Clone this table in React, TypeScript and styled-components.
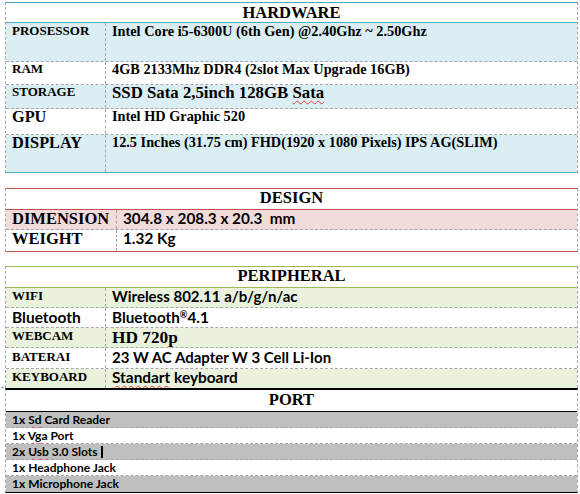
import React from "react";
import styled, { createGlobalStyle, css } from "styled-components";

const GlobalStyle = createGlobalStyle`
  html, body { margin: 0; padding: 0; background: #ffffff; }
  * { box-sizing: border-box; }
`;

const SERIF = `"Liberation Serif", "Times New Roman", serif`;
const SANS = `Lato, "Noto Sans", "Liberation Sans", sans-serif`;
const GRID = "#a6a6a6";

type Accent = { line: string; band: string };
const ACCENTS: Record<string, Accent> = {
  hardware: { line: "#4bacc6", band: "#daeef3" },
  design: { line: "#c0504d", band: "#f2dbdb" },
  peripheral: { line: "#9bbb59", band: "#eaf1dd" },
  port: { line: "#000000", band: "#bfbfbf" },
};

const Page = styled.div`
  position: relative;
  width: 578px;
  padding: 2px 0 0 5px;
  display: flex;
  flex-direction: column;
  color: #000;
`;

const Section = styled.section<{ $line: string; $gap: number; $top?: number; $bottom?: number }>`
  position: relative;
  margin-top: ${(p) => p.$gap}px;
  width: 573px;
  border-top: ${(p) => p.$top ?? 1}px solid ${(p) => p.$line};
  border-bottom: ${(p) => p.$bottom ?? 1}px solid ${(p) => p.$line};
  border-left: 1px dashed ${GRID};
  border-right: 1px dashed ${GRID};
  display: flex;
  flex-direction: column;
`;

const Header = styled.div<{ $line: string; $h: number; $pad: number }>`
  height: ${(p) => p.$h}px;
  border-bottom: 1px solid ${(p) => p.$line};
  padding-top: ${(p) => p.$pad}px;
  text-align: center;
  font-family: ${SERIF};
  font-weight: 700;
  font-size: 16.5px;
  line-height: 1;
  background: #fff;
`;

const Row = styled.div<{ $h: number; $bg: string; $label?: number }>`
  display: grid;
  grid-template-columns: ${(p) => (p.$label ? `${p.$label}px 1fr` : "1fr")};
  height: ${(p) => p.$h}px;
  background: ${(p) => p.$bg};
  border-bottom: 1px dashed ${GRID};
  &:last-child {
    border-bottom: none;
  }
`;

const Cell = styled.div<{ $font: "serif" | "sans"; $size: number; $pad: number; $divider?: boolean }>`
  padding: ${(p) => p.$pad}px 4px 0 6px;
  font-family: ${(p) => (p.$font === "serif" ? SERIF : SANS)};
  font-weight: 700;
  font-size: ${(p) => p.$size}px;
  line-height: 1;
  white-space: pre;
  min-width: 0;
  ${(p) =>
    p.$divider &&
    css`
      border-right: 1px dashed ${GRID};
    `}
`;

const Misspelled = styled.span`
  text-decoration: underline wavy #e0403a;
  text-decoration-thickness: 1px;
  text-decoration-skip-ink: none;
  text-underline-offset: 2px;
`;

const Mark = styled.sup`
  font-size: 0.6em;
  vertical-align: 0.55em;
  line-height: 0;
`;

const Caret = styled.span`
  display: inline-block;
  width: 2px;
  height: 12px;
  margin-left: 3px;
  background: #000;
  vertical-align: -2px;
`;

const MoveHandle = styled.span`
  position: absolute;
  left: -6px;
  top: -6px;
  width: 5px;
  height: 6px;
  font-family: ${SANS};
  font-size: 7px;
  line-height: 6px;
  color: #6f8fc4;
  text-align: center;
`;

type Spec = {
  label: React.ReactNode;
  lf: "serif" | "sans";
  ls: number;
  value: React.ReactNode;
  vf: "serif" | "sans";
  vs: number;
  h: number;
  band: boolean;
  pad?: number;
};

const hardware: Spec[] = [
  { label: "PROSESSOR", lf: "serif", ls: 13, value: "Intel Core i5-6300U (6th Gen) @2.40Ghz ~ 2.50Ghz", vf: "serif", vs: 14.3, h: 39, band: true, pad: 1 },
  { label: "RAM", lf: "serif", ls: 13, value: "4GB 2133Mhz DDR4 (2slot Max Upgrade 16GB)", vf: "serif", vs: 14.3, h: 23, band: false, pad: 0 },
  { label: "STORAGE", lf: "serif", ls: 13, value: <>SSD Sata 2,5inch 128GB <Misspelled>Sata</Misspelled></>, vf: "serif", vs: 16.8, h: 24, band: true, pad: 0 },
  { label: "GPU", lf: "serif", ls: 16.3, value: "Intel HD Graphic 520", vf: "serif", vs: 14.3, h: 26, band: false, pad: 0 },
  { label: "DISPLAY", lf: "serif", ls: 16.3, value: "12.5 Inches (31.75 cm) FHD(1920 x 1080 Pixels) IPS AG(SLIM)", vf: "serif", vs: 14.3, h: 37, band: true, pad: 0 },
];

const design: Spec[] = [
  { label: "DIMENSION", lf: "serif", ls: 16.5, value: "304.8 x 208.3 x 20.3  mm", vf: "sans", vs: 15.3, h: 20, band: true, pad: 1 },
  { label: "WEIGHT", lf: "serif", ls: 16.5, value: "1.32 Kg", vf: "sans", vs: 15.3, h: 21, band: false, pad: 1 },
];

const peripheral: Spec[] = [
  { label: "WIFI", lf: "serif", ls: 13, value: "Wireless 802.11 a/b/g/n/ac", vf: "sans", vs: 15, h: 20, band: true, pad: 1 },
  { label: "Bluetooth", lf: "sans", ls: 15.5, value: <>Bluetooth<Mark>®</Mark>4.1</>, vf: "sans", vs: 15.3, h: 20, band: false, pad: 2 },
  { label: "WEBCAM", lf: "serif", ls: 13, value: "HD 720p", vf: "serif", vs: 17.3, h: 20, band: true, pad: 1 },
  { label: "BATERAI", lf: "serif", ls: 13, value: "23 W AC Adapter W 3 Cell Li-Ion", vf: "sans", vs: 15, h: 21, band: false, pad: 2 },
  { label: "KEYBOARD", lf: "serif", ls: 13, value: <><Misspelled>Standart</Misspelled> keyboard</>, vf: "sans", vs: 15.4, h: 19, band: true, pad: 1 },
];

const ports: React.ReactNode[] = [
  <>1x <Misspelled>Sd</Misspelled> Card Reader</>,
  <>1x <Misspelled>Vga</Misspelled> Port</>,
  <>2x <Misspelled>Usb</Misspelled> 3.0 Slots<Caret /></>,
  <>1x Headphone Jack</>,
  <>1x Microphone Jack</>,
];

function SpecTable({
  title,
  accent,
  rows,
  labelWidth,
  gap,
  headerH,
  headerPad,
  bottom,
}: {
  title: string;
  accent: Accent;
  rows: Spec[];
  labelWidth: number;
  gap: number;
  headerH: number;
  headerPad: number;
  bottom?: number;
}) {
  return (
    <Section $line={accent.line} $gap={gap} $bottom={bottom}>
      <Header $line={accent.line} $h={headerH} $pad={headerPad}>
        {title}
      </Header>
      {rows.map((r, i) => (
        <Row key={i} $h={r.h} $bg={r.band ? accent.band : "#ffffff"} $label={labelWidth}>
          <Cell $font={r.lf} $size={r.ls} $pad={r.pad ?? 0} $divider>
            {r.label}
          </Cell>
          <Cell $font={r.vf} $size={r.vs} $pad={r.pad ?? 0}>
            {r.value}
          </Cell>
        </Row>
      ))}
    </Section>
  );
}

export default function App() {
  return (
    <>
      <GlobalStyle />
      <Page>
        <SpecTable title="HARDWARE" accent={ACCENTS.hardware} rows={hardware} labelWidth={100} gap={0} headerH={20} headerPad={2} />
        <SpecTable title="DESIGN" accent={ACCENTS.design} rows={design} labelWidth={111} gap={15} headerH={21} headerPad={1} />
        <SpecTable title="PERIPHERAL" accent={ACCENTS.peripheral} rows={peripheral} labelWidth={100} gap={14} headerH={21} headerPad={1} bottom={0} />
        <Section $line={ACCENTS.port.line} $gap={0} $top={2}>
          <MoveHandle>+</MoveHandle>
          <Header $line={ACCENTS.port.line} $h={22} $pad={2}>
            PORT
          </Header>
          {ports.map((p, i) => (
            <Row key={i} $h={16} $bg={i % 2 === 0 ? ACCENTS.port.band : "#ffffff"}>
              <Cell $font="sans" $size={12} $pad={2}>
                {p}
              </Cell>
            </Row>
          ))}
        </Section>
      </Page>
    </>
  );
}
